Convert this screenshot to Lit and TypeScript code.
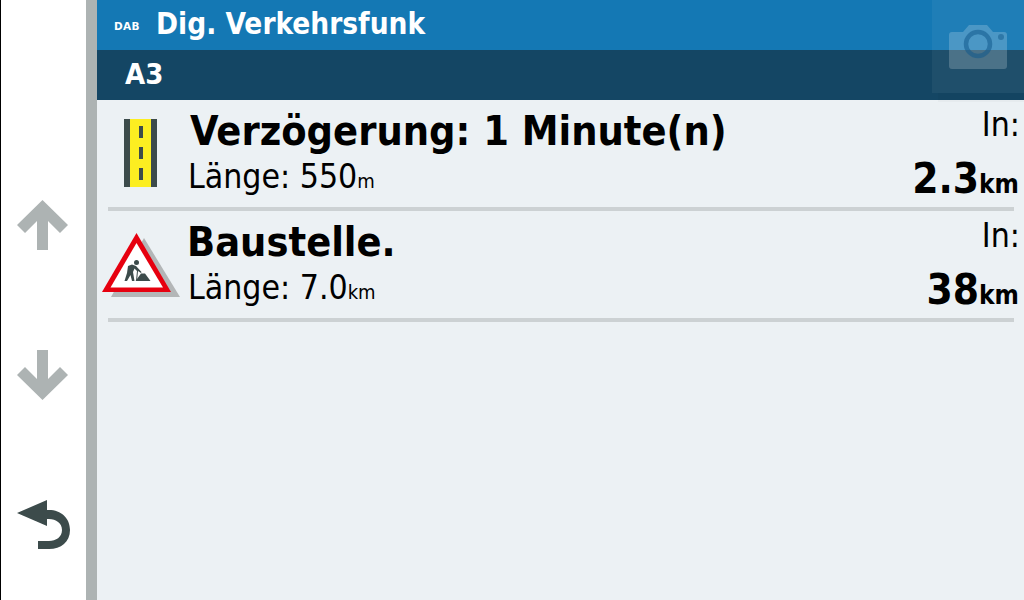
import { LitElement, html, css, svg } from "lit";
import { customElement } from "lit/decorators.js";

const road = svg`<svg width="33" height="68" viewBox="0 0 33 68"><rect width="33" height="68" fill="#3c4b4b"/><rect x="6" width="21" height="68" fill="#fcee21"/><rect x="15" y="7" width="4" height="12" fill="#3c4b4b"/><rect x="15" y="28" width="4" height="12" fill="#3c4b4b"/><rect x="15" y="49" width="4" height="12" fill="#3c4b4b"/></svg>`;
const sign = svg`<svg width="82" height="70" viewBox="0 0 82 70">
<polygon points="44,8 80,67 11,67" fill="#b3b6b7"/>
<polygon points="36.500,3 71,62 2,62" fill="#e6000f"/>
<polygon points="36.500,13 63,57.500 10.500,57.500" fill="#fff"/>
<circle cx="36.500" cy="32.500" r="2.500" fill="#3c4b4b"/>
<path d="M32 34.500 L28 36 L27 43 L24.500 51 H27 L30.500 45 L32 51 H34.500 L33 42 L34.500 38.500 L37 41 L36 51 H37 L38 41 L41 43 L41.500 42 L36 36 Z" fill="#3c4b4b"/>
<path d="M35.500 51 L41 43.500 H45 L50.500 51 Z" fill="#3c4b4b"/></svg>`;
const up = svg`<svg width="52" height="50" viewBox="0 0 52 50"><path d="M25.500 0 L51 25 L43 33 L31 21 V50 H20 V21 L8 33 L0 25 Z" fill="#adb3b3"/></svg>`;
const down = svg`<svg width="52" height="50" viewBox="0 0 52 50"><path d="M25.500 50 L51 25 L43 17 L31 29 V0 H20 V29 L8 17 L0 25 Z" fill="#adb3b3"/></svg>`;
const back = svg`<svg width="54" height="50" viewBox="0 0 54 50"><path d="M0 13 L30 0 V10 H32 C44 10 53 18 53 30 C53 42 44 49 32 49 H21 V41 H32 C39 41 45 37 45 30 C45 23 39 19 32 19 H30 V26 Z" fill="#3c4b4b"/></svg>`;
const camera = svg`<svg width="58" height="44" viewBox="0 0 58 44"><path fill-rule="evenodd" d="M3 7 H14 L20 0 H38 L44 7 H55 Q58 7 58 10 V41 Q58 44 55 44 H3 Q0 44 0 41 V10 Q0 7 3 7 Z" fill="#fff" fill-opacity=".2"/><circle cx="29" cy="19" r="12" fill="none" stroke="#12598c" stroke-opacity=".55" stroke-width="4.500"/><circle cx="52" cy="12" r="3" fill="#12598c" fill-opacity=".5"/></svg>`;

@customElement("app-root")
export class AppRoot extends LitElement {
  static styles = css`
    :host { display: block; width: 1024px; height: 600px; overflow: hidden; position: relative; font-family: "DejaVu Sans", sans-serif; color: #000; }
    .screen { display: flex; width: 1024px; height: 600px; }
    .side { border-left: 1px solid #000; background: #fff; box-sizing: border-box; width: 86px; display: flex; flex-direction: column; align-items: flex-start; padding: 200px 0 0 16px; }
    .side .up { height: 150px; }
    .side .down { height: 150px; }
    .rail { width: 11px; background: #adb3b3; }
    .main { flex: 1; background: #ecf1f4; display: flex; flex-direction: column; }
    .top { height: 50px; background: #1478b4; color: #fff; display: flex; align-items: center; padding-left: 17px; font-weight: 700; }
    .dab { font-size: 10.500px; width: 42px; letter-spacing: .3px; padding-top: 1px; }
    .title { font-size: 29.500px; font-stretch: condensed; white-space: nowrap; line-height: 44px; padding-bottom: 3px; }
    .sub { height: 50px; background: #144664; color: #fff; display: flex; align-items: center; padding: 0 0 3px 28px; box-sizing: border-box; font-size: 29px; font-stretch: condensed; font-weight: 700; }
    .list { display: flex; flex-direction: column; padding: 0 10px 0 11px; }
    .row { height: 111px; box-sizing: border-box; border-bottom: 4px solid #ccd1d3; display: flex; }
    .ico { width: 80px; display: flex; }
    .ico.r { padding: 19px 0 0 16px; box-sizing: border-box; width: 82px; }
    .ico.s { margin-left: -8px; padding-top: 19px; box-sizing: border-box; width: 88px; }
    .text { flex: 1; display: flex; flex-direction: column; }
    .h { font-size: 41.100px; font-stretch: condensed; font-weight: 700; line-height: 44px; white-space: nowrap; padding-top: 9px; }
    .h.b { margin-left: -1px; }
    .l { font-stretch: condensed; font-size: 33.500px; line-height: 40px; white-space: nowrap; padding-top: 4px; margin-left: -2px; }
    .l.b { margin-left: 0; }
    .l small { font-size: 20px; }
    .dist { display: flex; flex-direction: column; align-items: flex-end; margin-right: -5px; }
    .in { font-stretch: condensed; font-size: 33.500px; line-height: 40px; padding-top: 5px; margin-right: -1px; }
    .val { font-size: 42px; font-stretch: condensed; font-weight: 700; line-height: 44px; padding-top: 12px; }
    .val small { font-size: 26px; }
    .cam { position: absolute; left: 932px; top: 0; width: 92px; height: 93px; background: rgba(255,255,255,.05); display: flex; justify-content: center; padding-top: 25px; box-sizing: border-box; }
    .cam-shadow { position: absolute; left: 938px; top: 93px; width: 86px; height: 9px; background: rgba(0,0,0,.025); }
  `;

  render() {
    return html`<div class="screen">
      <div class="side">
        <div class="up">${up}</div>
        <div class="down">${down}</div>
        <div>${back}</div>
      </div>
      <div class="rail"></div>
      <div class="main">
        <div class="top"><span class="dab">DAB</span><span class="title">Dig. Verkehrsfunk</span></div>
        <div class="sub">A3</div>
        <div class="list">
          <div class="row">
            <div class="ico r">${road}</div>
            <div class="text"><div class="h">Verzögerung: 1 Minute(n)</div><div class="l">Länge: 550<small>m</small></div></div>
            <div class="dist"><div class="in">In:</div><div class="val">2.3<small>km</small></div></div>
          </div>
          <div class="row">
            <div class="ico s">${sign}</div>
            <div class="text"><div class="h b">Baustelle.</div><div class="l b">Länge: 7.0<small>km</small></div></div>
            <div class="dist"><div class="in">In:</div><div class="val">38<small>km</small></div></div>
          </div>
        </div>
      </div>
    </div>
    <div class="cam-shadow"></div>
    <div class="cam">${camera}</div>`;
  }
}
